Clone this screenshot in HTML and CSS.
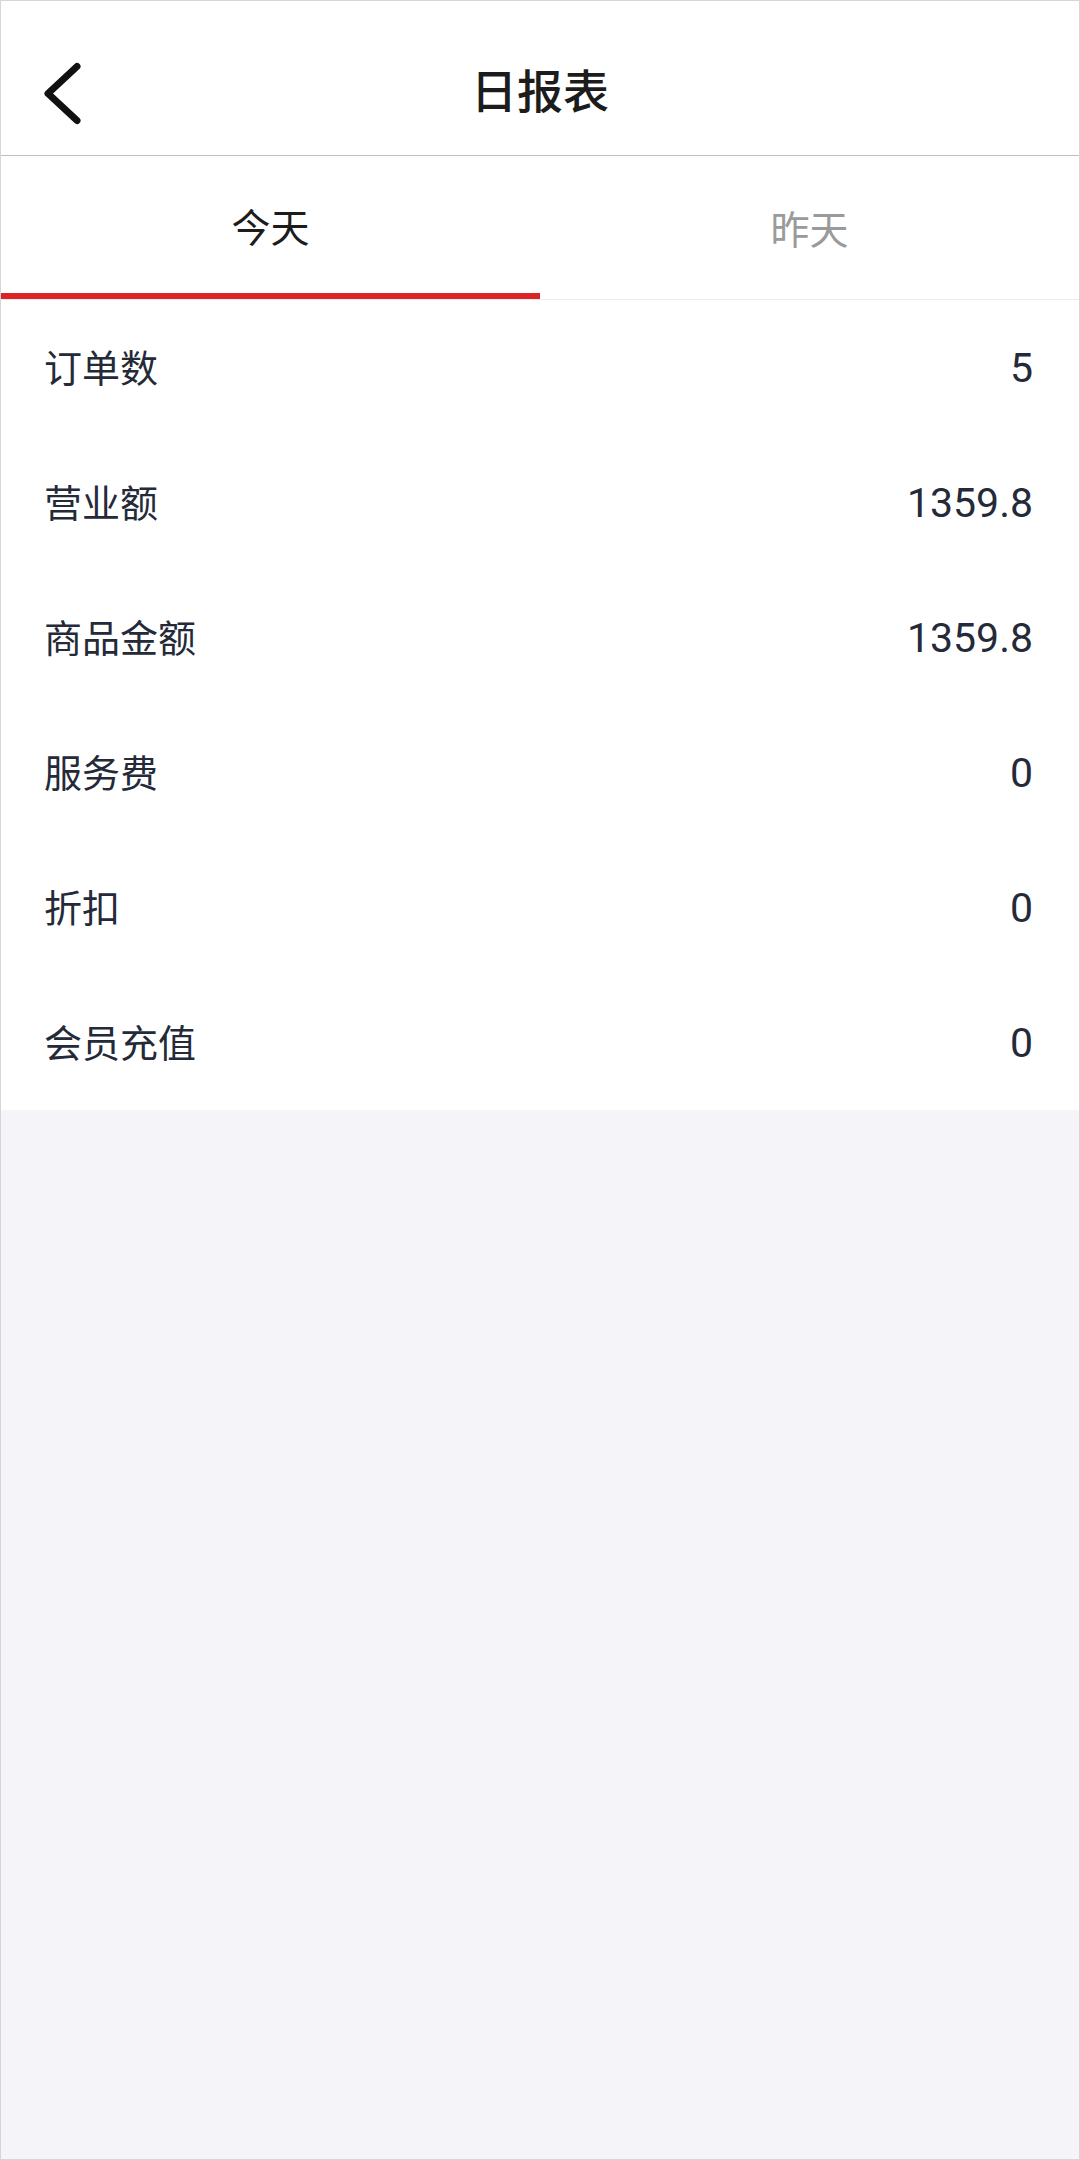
FILE: index.html
```html
<!DOCTYPE html>
<html lang="zh">
<head>
<meta charset="utf-8">
<title>日报表</title>
<link rel="stylesheet" href="styles.css">
</head>
<body>
<div class="screen">
  <header class="header">
    <div class="back">
      <svg width="44" height="72" viewBox="0 0 44 72"><path d="M37 12.5 L8 39.5 L37 66.5" fill="none" stroke="#111" stroke-width="7" stroke-linecap="round" stroke-linejoin="round"/></svg>
    </div>
    <h1 class="title">日报表</h1>
    <div></div>
  </header>
  <nav class="tabs">
    <div class="tab active">今天</div>
    <div class="tab">昨天</div>
  </nav>
  <section class="list">
    <div class="row"><span class="label">订单数</span><span class="value">5</span></div>
    <div class="row"><span class="label">营业额</span><span class="value">1359.8</span></div>
    <div class="row"><span class="label">商品金额</span><span class="value">1359.8</span></div>
    <div class="row"><span class="label">服务费</span><span class="value">0</span></div>
    <div class="row"><span class="label">折扣</span><span class="value">0</span></div>
    <div class="row"><span class="label">会员充值</span><span class="value">0</span></div>
  </section>
</div>
</body>
</html>
```
FILE: styles.css
```css
html, body {
  margin: 0;
  padding: 0;
}
body {
  font-family: "Noto Sans CJK SC", "Noto Sans", sans-serif;
}
.screen {
  width: 1080px;
  height: 2160px;
  box-sizing: border-box;
  border: 1px solid #d6d6d6;
  background: #f4f4f9;
  display: flex;
  flex-direction: column;
}
.header {
  height: 155px;
  box-sizing: border-box;
  padding: 20px 39px 0;
  background: #fff;
  border-bottom: 1px solid #bdbdbd;
  display: grid;
  grid-template-columns: 1fr auto 1fr;
  align-items: center;
}
.back {
  display: flex;
  align-items: center;
  padding-top: 4px;
}
.back svg {
  display: block;
}
.title {
  margin: 0;
  font-size: 46px;
  font-weight: 500;
  color: #1c1c1c;
  line-height: 1;
}
.tabs {
  height: 143px;
  background: #fff;
  border-bottom: 1px solid #ececec;
  display: flex;
}
.tab {
  flex: 1;
  display: flex;
  align-items: center;
  justify-content: center;
  font-size: 39px;
  color: #9a9a9a;
  box-sizing: border-box;
  padding-bottom: 2px;
}
.tab.active {
  color: #1c1c1c;
  border-bottom: 6px solid #dc2426;
  padding-bottom: 0;
}
.list {
  background: #fff;
  display: flex;
  flex-direction: column;
}
.row {
  height: 135px;
  display: flex;
  align-items: center;
  justify-content: space-between;
  padding: 0 46px 0 43px;
}
.label {
  font-size: 38px;
  color: #242a38;
  padding-bottom: 4px;
}
.value {
  font-family: Roboto, "Noto Sans", sans-serif;
  font-size: 41px;
  color: #242a38;
}
```
